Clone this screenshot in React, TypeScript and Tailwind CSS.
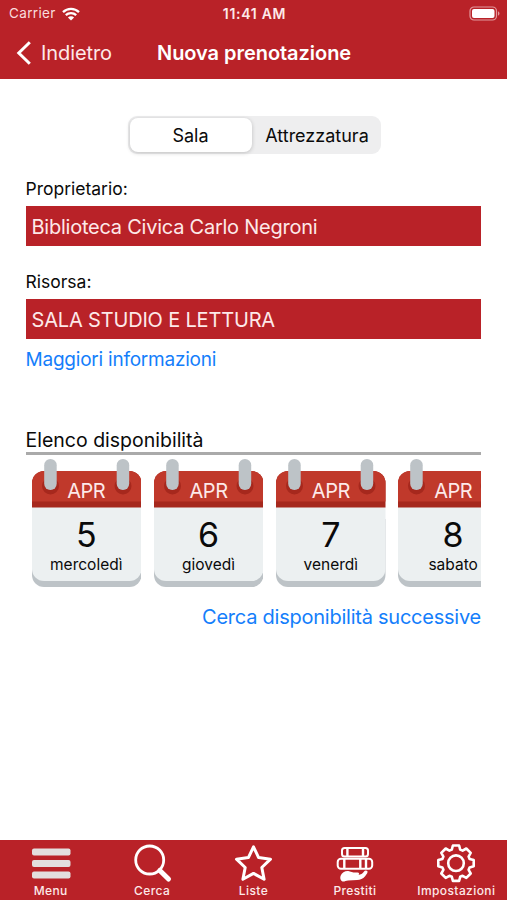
import { useState, type ReactNode } from 'react';

interface Day {
  month: string;
  day: number;
  weekday: string;
}

const days: Day[] = [
  { month: 'APR', day: 5, weekday: 'mercoledì' },
  { month: 'APR', day: 6, weekday: 'giovedì' },
  { month: 'APR', day: 7, weekday: 'venerdì' },
  { month: 'APR', day: 8, weekday: 'sabato' },
];

function StatusBar() {
  return (
    <div className="grid h-[27px] grid-cols-3 items-center pl-[9px] pr-[7px] text-[13.5px] leading-[27px]">
      <div className="flex items-center gap-[6px]">
        <span className="tracking-[0.35px] text-[#f9dcdd]">Carrier</span>
        <svg width="18" height="14" viewBox="0 0 18 14" fill="none" stroke="#fff" strokeWidth="2.3">
          <path d="M1 5.2a11.5 11.5 0 0 1 16 0" />
          <path d="M3.8 8.2a7.5 7.5 0 0 1 10.4 0" />
          <path d="M9 13.6 5.9 10.5a4.4 4.4 0 0 1 6.2 0z" fill="#fff" stroke="none" />
        </svg>
      </div>
      <span className="text-center text-[14px] font-semibold tracking-[0.7px] text-[#fde9e9]">11:41 AM</span>
      <svg className="justify-self-end" width="31" height="15" viewBox="0 0 31 15">
        <rect x="1" y="1" width="26.5" height="13" rx="4" fill="none" stroke="#e29a9d" strokeWidth="1.2" />
        <rect x="3" y="3" width="22.5" height="9" rx="2" fill="#fff" />
        <path d="M29 5.3c2 .8 2 3.6 0 4.4z" fill="#e29a9d" />
      </svg>
    </div>
  );
}

function Header() {
  return (
    <header className="h-[79px] shrink-0 bg-[#b92228] text-white">
      <StatusBar />
      <div className="grid h-[51px] grid-cols-[157px_1fr] items-center">
        <button className="flex items-center gap-[9px] pl-[16px] text-left text-[20px] tracking-[-0.1px] text-[#fde9e9]">
          <svg width="16" height="24" viewBox="0 0 16 24" fill="none" stroke="#fff" strokeWidth="3">
            <path d="M13.8 1.2 2.8 12l11 10.8" strokeLinejoin="miter" />
          </svg>
          Indietro
        </button>
        <h1 className="whitespace-nowrap text-[20px] font-semibold tracking-[-0.05px]">Nuova prenotazione</h1>
      </div>
    </header>
  );
}

function Field({ label, value, valueClass }: { label: string; value: string; valueClass: string }) {
  return (
    <div>
      <div className="h-[34px] text-[17.5px] leading-[34px]">{label}</div>
      <div
        className={`h-10 whitespace-nowrap bg-[#b92228] px-[6px] text-[20px] leading-[42px] text-[#fde9e9] ${valueClass}`}
      >
        {value}
      </div>
    </div>
  );
}

function CalendarCard({ month, day, weekday }: Day) {
  return (
    <div className="relative h-[129px] w-[109.5px] shrink-0">
      <svg className="absolute inset-0" width="109.5" height="129" viewBox="0 0 109.5 129">
        <path d="M0 60h109.5v56a12 12 0 0 1-12 12H12a12 12 0 0 1-12-12z" fill="#bdc3c7" />
        <path d="M0 48h109.5v62a12 12 0 0 1-12 12H12a12 12 0 0 1-12-12z" fill="#ecf0f1" />
        <path d="M12 12h85.5a12 12 0 0 1 12 12v24.5H0V24a12 12 0 0 1 12-12z" fill="#a6281d" />
        <path d="M12 12h85.5a12 12 0 0 1 12 12v18.5H0V24a12 12 0 0 1 12-12z" fill="#c0392b" />
        <circle cx="18.5" cy="27" r="8.5" fill="#a6281d" />
        <circle cx="91" cy="27" r="8.5" fill="#a6281d" />
        <rect x="12.2" y="0" width="12.5" height="31" rx="6.2" fill="#bdc3c7" />
        <rect x="84.7" y="0" width="12.5" height="31" rx="6.2" fill="#bdc3c7" />
      </svg>
      <div className="relative flex flex-col items-center pt-[20px]">
        <span className="text-[20px] leading-[25px] tracking-[-0.5px] text-[#fde9e9]">{month}</span>
        <span className="mt-[11px] text-[34px] leading-[40px]">{day}</span>
        <span className="text-[15.5px] leading-[20px]">{weekday}</span>
      </div>
    </div>
  );
}

function TabItem({ label, children }: { label: string; children: ReactNode }) {
  return (
    <button className="flex flex-1 flex-col items-center pt-[3px]">
      <svg width="42" height="40" viewBox="0 0 42 40" fill="none" stroke="#fff" strokeWidth="2.6">
        {children}
      </svg>
      <span className="text-[12px] font-medium leading-[15px] tracking-[0.4px] text-[#fde9e9]">{label}</span>
    </button>
  );
}

function TabBar() {
  return (
    <nav className="flex h-[60px] shrink-0 bg-[#b92228] text-white">
      <TabItem label="Menu">
        <g fill="#e3dede" stroke="none">
          <rect x="2" y="5.5" width="38.5" height="7" rx="2" />
          <rect x="2" y="17" width="38.5" height="7" rx="2" />
          <rect x="2" y="28.5" width="38.5" height="7" rx="2" />
        </g>
      </TabItem>
      <TabItem label="Cerca">
        <circle cx="18.7" cy="17" r="14" strokeWidth="2.8" />
        <path d="m28.8 27.5 8.7 8.5" strokeWidth="5" strokeLinecap="round" />
      </TabItem>
      <TabItem label="Liste">
        <path
          d="M20.5 3.8 25.6 14.6 37.5 16.2 28.8 24.5 31.1 36.3 20.5 30.4 9.9 36.3 12.2 24.5 3.5 16.2 15.4 14.6z"
          strokeWidth="3"
          strokeLinejoin="round"
        />
      </TabItem>
      <TabItem label="Prestiti">
        <g strokeWidth="2">
          <rect x="8" y="5" width="26" height="8.600" rx="2.600" />
          <path d="M13.400 5v8.600M29 5v8.600" strokeWidth="2.400" />
          <rect x="3.700" y="15.700" width="34.500" height="10" rx="3.200" />
          <path d="M10.300 15.700v10M26.300 15.700v10M32 15.700v10" strokeWidth="2.400" />
        </g>
        {/* Open hand under the books */}
        <path
          d="M6.500 33c1.500-3.500 5-5.400 8.500-4.800l4.500 1.200 4 .2c1.800.2 2.200 1.700.9 2.300 2.400-.4 4.200-1.400 5.400-3.200.9-1.300 2.600-1.600 3.500-.6.8 1-.3 3-2.200 5.200-2.200 2.500-4.800 3.700-8 3.800l-9 .4c-2 .3-4 1.300-5.600 1-1.600-.4-2.800-2.800-2-5.500z"
          fill="#fff"
          stroke="none"
        />
      </TabItem>
      <TabItem label="Impostazioni">
        <circle cx="21" cy="20.200" r="7.800" />
        <path
          d="M17.900 2.500h6.200l1.100 4.100 2.400 1 3.700-2.100 4.400 4.400-2.100 3.700 1 2.400 4.100 1.100v6.200l-4.100 1.100-1 2.400 2.100 3.700-4.400 4.400-3.700-2.100-2.400 1-1.100 4.100h-6.200l-1.100-4.100-2.400-1-3.700 2.100-4.400-4.400 2.100-3.700-1-2.400-4.100-1.100v-6.200l4.100-1.100 1-2.400-2.100-3.700 4.400-4.400 3.700 2.100 2.400-1z"
          strokeLinejoin="round"
        />
      </TabItem>
    </nav>
  );
}

export default function App() {
  const [tab, setTab] = useState('Sala');

  return (
    <div className="flex h-[900px] w-[507px] flex-col overflow-hidden bg-white font-['Inter','Liberation_Sans',sans-serif] text-[#0a0a0a]">
      <Header />

      <main className="flex flex-1 flex-col pl-[25.5px] pr-[26px] pt-[37px]">
        <div className="ml-[102px] grid h-[38px] w-[253px] grid-cols-[122px_1fr] rounded-[9px] bg-[#eeeeef] p-[2px]">
          {['Sala', 'Attrezzatura'].map((name) => (
            <button
              key={name}
              onClick={() => setTab(name)}
              className={`rounded-[8px] text-[18px] first:pl-0 last:pl-1 ${
                tab === name ? 'bg-white shadow-[0_1px_4px_rgba(0,0,0,0.2)]' : ''
              }`}
            >
              {name}
            </button>
          ))}
        </div>

        <div className="mt-[18px] flex flex-col gap-[19px]">
          <Field
            label="Proprietario:"
            value="Biblioteca Civica Carlo Negroni"
            valueClass="tracking-[-0.24px]"
          />
          <Field label="Risorsa:" value="SALA STUDIO E LETTURA" valueClass="tracking-[-0.17px]" />
        </div>
        <a className="h-10 self-start whitespace-nowrap text-[19px] leading-[41px] tracking-[-0.22px] text-[#147efb]">
          Maggiori informazioni
        </a>

        {/* Available days */}
        <h2 className="mt-[48px] h-[28px] border-b-[3px] border-[#aaaaaa] text-[19.5px] leading-[26px]">
          Elenco disponibilità
        </h2>
        <div className="mt-[4px] flex gap-[12.8px] overflow-hidden pl-[6px]">
          {days.map((d) => (
            <CalendarCard key={d.day} {...d} />
          ))}
        </div>
        <a className="mt-[14px] self-end whitespace-nowrap text-[20px] leading-[30px] tracking-[-0.24px] text-[#147efb]">
          Cerca disponibilità successive
        </a>
      </main>

      <TabBar />
    </div>
  );
}
